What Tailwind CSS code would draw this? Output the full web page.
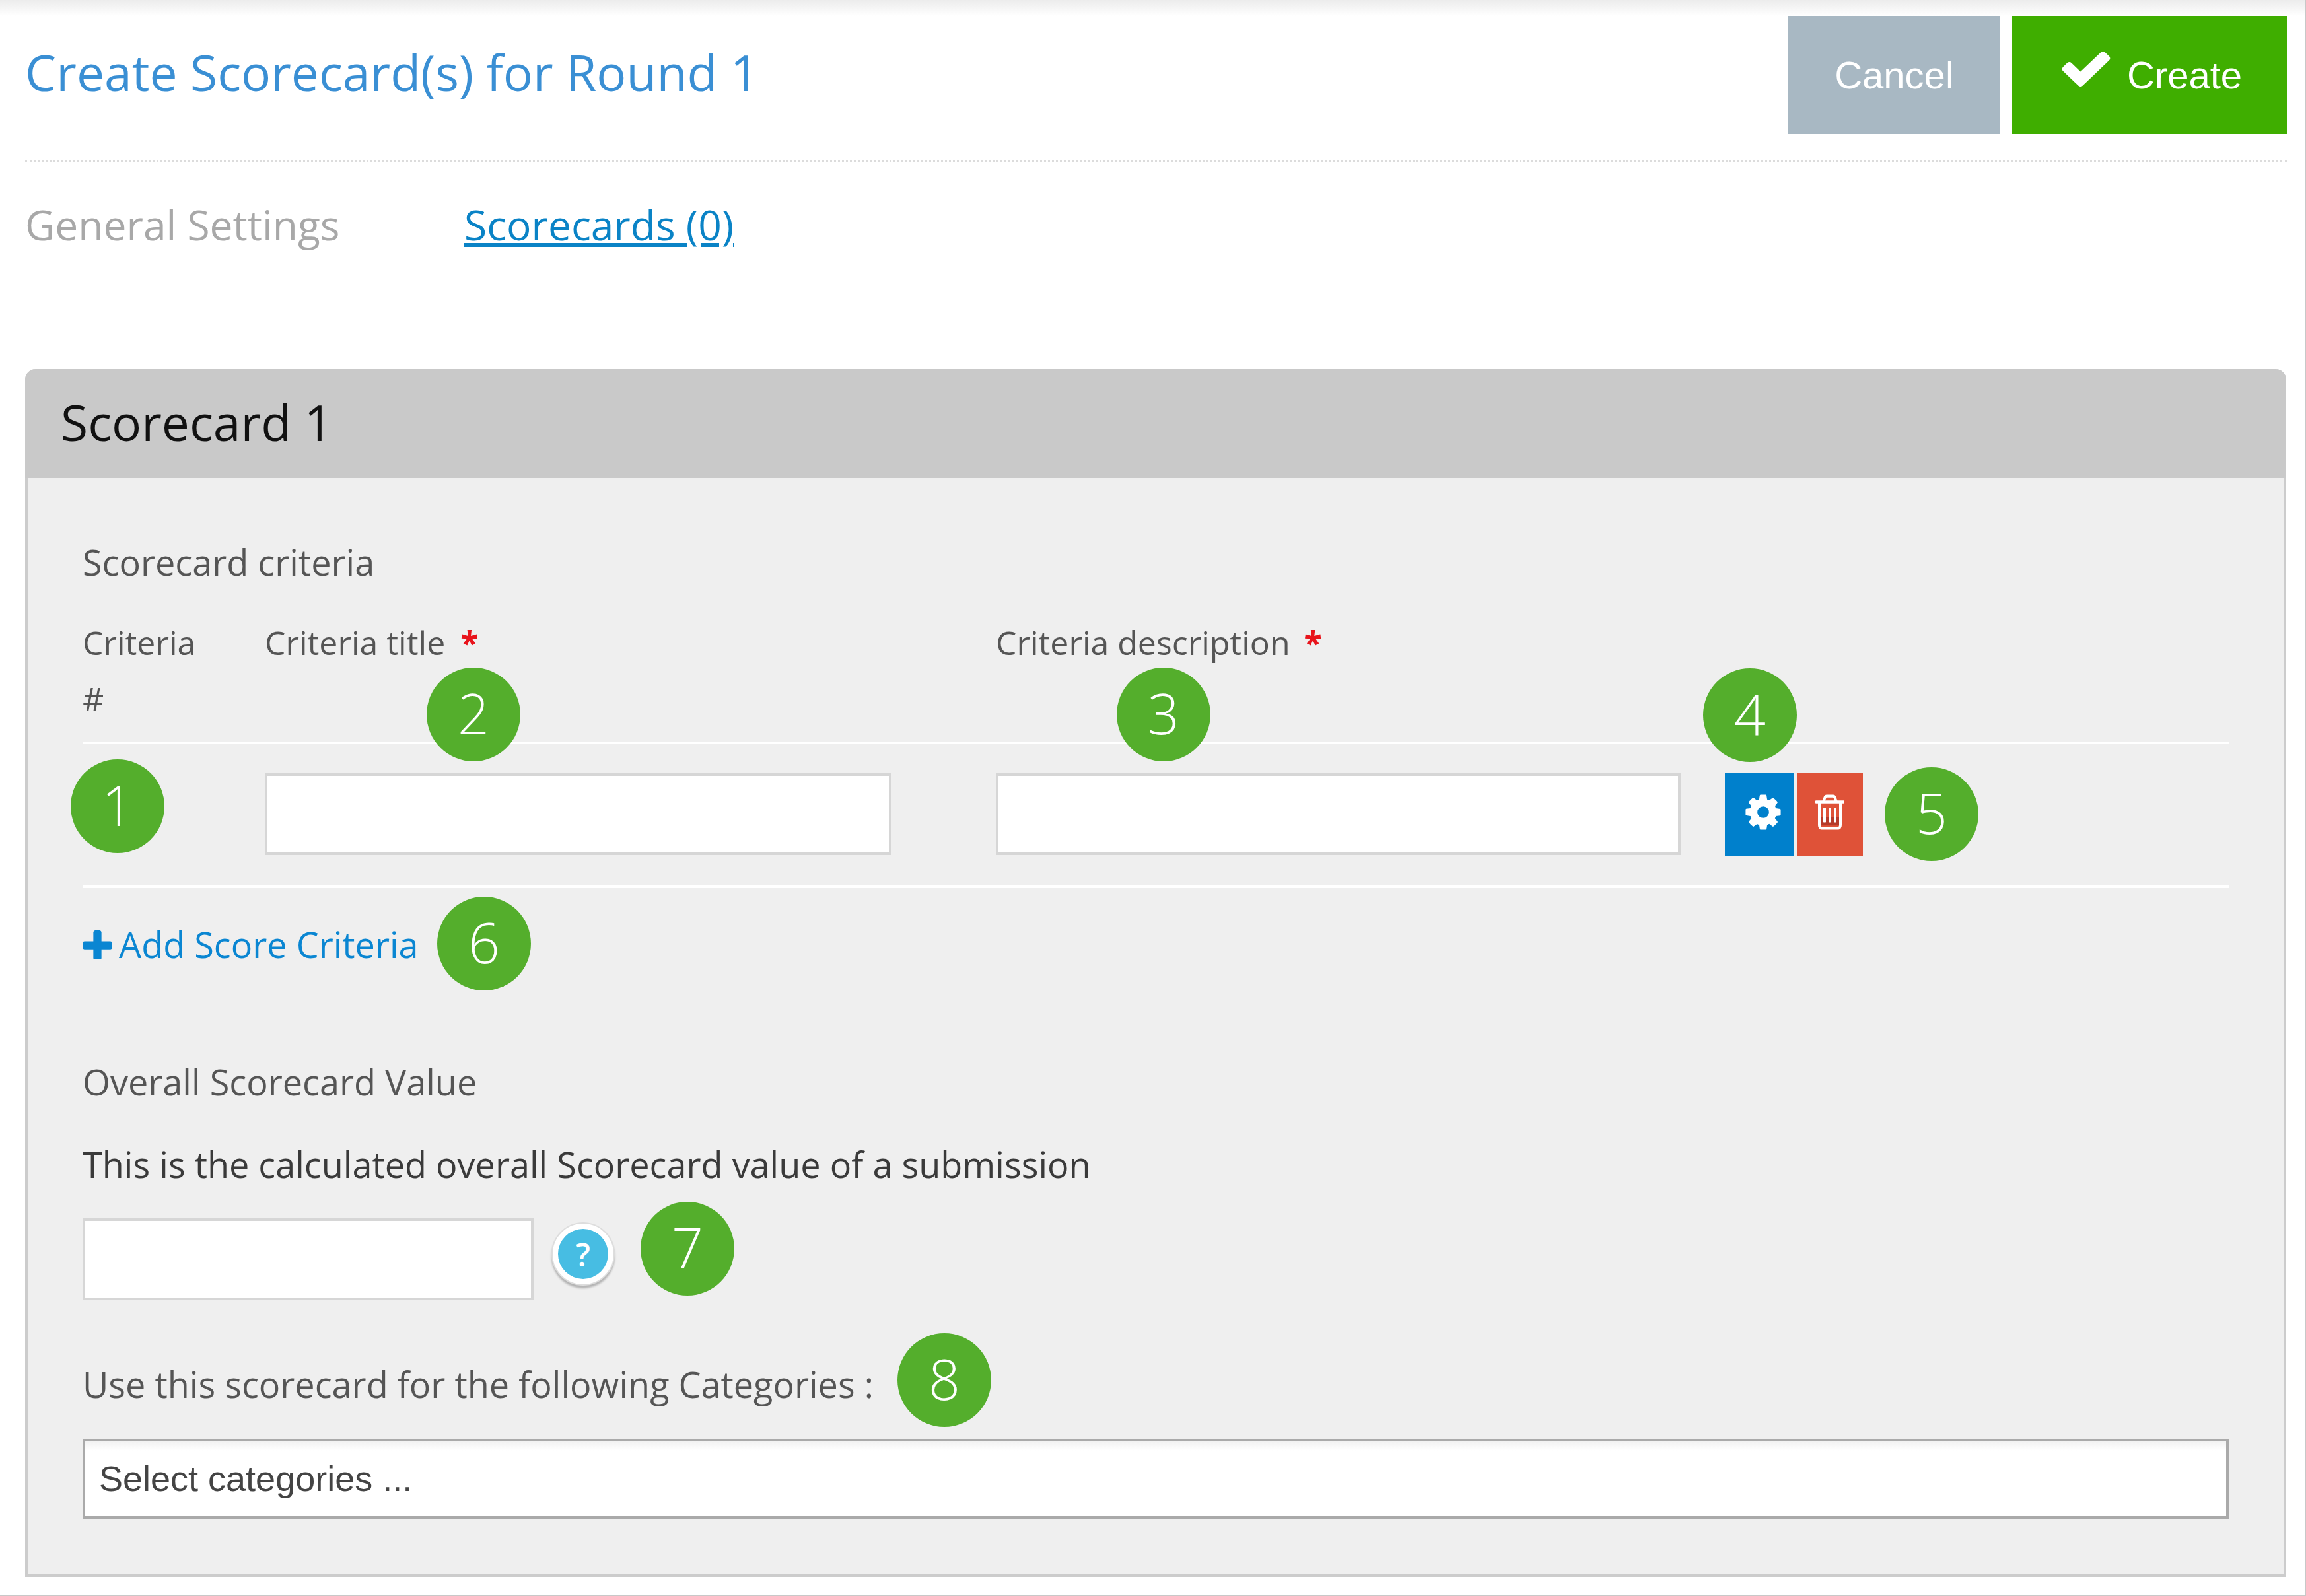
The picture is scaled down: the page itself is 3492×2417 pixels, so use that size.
<!DOCTYPE html>
<html>
<head>
<meta charset="utf-8">
<script src="https://cdn.jsdelivr.net/npm/@tailwindcss/browser@4"></script>
</head>
<body class="bg-white">
<div class="relative w-[3492px] h-[2417px] overflow-hidden bg-white font-['Open_Sans',sans-serif] border-r-[2px] border-b-[2px] border-[#c8c8c8]">
  <div class="h-[24px] bg-gradient-to-b from-[#ececec] to-white"></div>

  <header class="ml-[38px] w-[3425px] h-[221px] flex justify-between border-b-[3px] border-dotted border-[#dcdcdc]">
    <h1 class="h-[170px] flex items-center text-[75px] text-[#3a8fd4] font-normal">Create Scorecard(s) for Round 1</h1>
    <div class="flex gap-[18px] h-[179px]">
      <button class="w-[321px] bg-[#a8b8c3] text-white text-[58px] font-['Liberation_Sans',sans-serif]">Cancel</button>
      <button class="w-[416px] bg-[#3fae00] text-white text-[58px] font-['Liberation_Sans',sans-serif] flex items-center justify-center gap-[20px] pl-[2px]">
        <svg class="w-[84px] h-[80px] -mt-[22px]" viewBox="0 0 1792 1792" preserveAspectRatio="none" fill="currentColor"><path d="M1671 566q0 40-28 68l-724 724-136 136q-28 28-68 28t-68-28l-136-136-362-362q-28-28-28-68t28-68l136-136q28-28 68-28t68 28l294 295 656-657q28-28 68-28t68 28l136 136q28 28 28 68z"/></svg>
        <span>Create</span>
      </button>
    </div>
  </header>

  <nav class="ml-[38px] h-[192px] pt-[60px] flex text-[62.300px] leading-[70px]">
    <span class="w-[665px] text-[#a8a8a8]">General Settings</span>
    <a class="text-[#0a83c6] underline">Scorecards (0)</a>
  </nav>

  <section class="mt-[122px] ml-[38px] w-[3424px] h-[1829px] flex flex-col bg-[#efefef] border-[4px] border-t-0 border-[#cccccc] rounded-t-[16px]">
    <div class="h-[165px] shrink-0 -mx-[4px] pl-[54px] pb-[5px] flex items-center bg-[#c9c9c9] rounded-t-[16px] text-[75px] text-[#111111]">Scorecard 1</div>

    <div class="px-[83px] text-[54px] text-[#555555]">
      <p class="mt-[96px] leading-[62px]">Scorecard criteria</p>

      <div class="mt-[49px] grid grid-cols-[276px_1107px_1fr] h-[192px] leading-[85px] text-[50px]">
        <div>Criteria<br>#</div>
        <div>Criteria title <span class="text-[#e8141c] font-bold ml-[10px]">*</span></div>
        <div>Criteria description <span class="text-[#e8141c] font-bold ml-[8px]">*</span></div>
      </div>

      <div class="h-[222px] border-y-[4px] border-white grid grid-cols-[276px_1107px_1fr] items-start pt-[44px]">
        <div></div>
        <div class="w-[949px] h-[124px] bg-white border-[4px] border-[#d6d6d6]"></div>
        <div class="flex">
          <div class="w-[1037px] h-[124px] bg-white border-[4px] border-[#d6d6d6]"></div>
          <div class="ml-[67px] w-[105px] h-[125px] bg-[#0080cc] flex items-center justify-center pl-[10px] pb-[8px] text-white">
            <svg class="w-[62px] h-[62px]" viewBox="0 0 1792 1792" fill="currentColor"><path d="M1152 896q0-106-75-181t-181-75-181 75-75 181 75 181 181 75 181-75 75-181zm512-109v222q0 12-8 23t-20 13l-185 28q-19 54-39 91 35 50 107 138 10 12 10 25t-9 23q-27 37-99 108t-94 71q-12 0-26-9l-138-108q-44 23-91 38-16 136-29 186-7 28-36 28h-222q-14 0-24.500-8.500t-11.500-21.500l-28-184q-49-16-90-37l-141 107q-10 9-25 9-14 0-25-11-126-114-165-168-7-10-7-23 0-12 8-23 15-21 51-66.500t54-70.500q-27-50-41-99l-183-27q-13-2-21-12.500t-8-23.500v-222q0-12 8-23t19-13l186-28q14-46 39-92-40-57-107-138-10-12-10-24 0-10 9-23 26-36 98.500-107.500t94.500-71.500q13 0 26 10l138 107q44-23 91-38 16-136 29-186 7-28 36-28h222q14 0 24.500 8.500t11.500 21.500l28 184q49 16 90 37l142-107q9-9 24-9 13 0 25 10 129 119 165 170 7 8 7 22 0 12-8 23-15 21-51 66.500t-54 70.500q26 50 41 98l183 28q13 2 21 12.500t8 23.500z"/></svg>
          </div>
          <div class="ml-[4px] w-[100px] h-[125px] bg-[#df5238] flex items-center justify-center pb-[8px] text-white">
            <svg class="w-[56px] h-[62px]" viewBox="0 0 1792 1792" preserveAspectRatio="none" fill="currentColor"><rect x="448" y="1100" width="896" height="380" fill="#b53a2a"/><path d="M704 736v576q0 14-9 23t-23 9h-64q-14 0-23-9t-9-23v-576q0-14 9-23t23-9h64q14 0 23 9t9 23zm256 0v576q0 14-9 23t-23 9h-64q-14 0-23-9t-9-23v-576q0-14 9-23t23-9h64q14 0 23 9t9 23zm256 0v576q0 14-9 23t-23 9h-64q-14 0-23-9t-9-23v-576q0-14 9-23t23-9h64q14 0 23 9t9 23zm128 724v-948h-896v948q0 22 7 40.500t14.500 27 10.500 8.500h832q3 0 10.500-8.500t14.500-27 7-40.500zm-672-1076h448l-48-117q-7-9-17-11h-317q-10 2-17 11zm928 32v64q0 14-9 23t-23 9h-96v948q0 83-47 143.500t-113 60.500h-832q-66 0-113-58.500t-47-141.500v-952h-96q-14 0-23-9t-9-23v-64q0-14 9-23t23-9h309l70-167q15-37 54-63t79-26h320q40 0 79 26t54 63l70 167h309q14 0 23 9t9 23z"/></svg>
          </div>
        </div>
      </div>

      <a class="mt-[50px] h-[70px] flex items-center gap-[10px] text-[#0a86d2]">
        <svg class="w-[45px] h-[45px]" viewBox="192 384 1408 1408" fill="currentColor"><path d="M1600 1024v192q0 40-28 68t-68 28h-416v416q0 40-28 68t-68 28h-192q-40 0-68-28t-28-68v-416h-416q-40 0-68-28t-28-68v-192q0-40 28-68t68-28h416v-416q0-40 28-68t68-28h192q40 0 68 28t28 68v416h416q40 0 68 28t28 68z"/></svg>
        <span>Add Score Criteria</span>
      </a>

      <p class="mt-[142px] leading-[62px]">Overall Scorecard Value</p>
      <p class="mt-[63px] leading-[62px] text-[#3a3a3a]">This is the calculated overall Scorecard value of a submission</p>

      <div class="mt-[51px] flex items-start">
        <div class="w-[683px] h-[124px] bg-white border-[4px] border-[#d6d6d6]"></div>
        <div class="ml-[27px] mt-[6px] w-[96px] h-[96px] rounded-full bg-white border-[2px] border-[#dddddd] shadow-[0_4px_3px_rgba(0,0,0,0.25)] flex items-center justify-center">
          <span class="w-[76px] h-[76px] pt-[2px] rounded-full bg-[#47bde3] text-white text-[48px] font-semibold flex items-center justify-center">?</span>
        </div>
      </div>

      <p class="mt-[96px] leading-[62px]">Use this scorecard for the following Categories :</p>

      <div class="mt-[52px] h-[121px] pl-[21px] flex items-center bg-gradient-to-b from-[#f2f2f2] from-0% to-white to-[12%] border-[4px] border-[#aaaaaa] text-[54px] text-[#444444] font-['Liberation_Sans',sans-serif]">Select categories ...</div>
    </div>
  </section>

  <!-- numbered callouts laid over the form -->
  <span class="absolute left-[107px] top-[1150px] w-[142px] h-[142px] pb-[4px] rounded-full bg-[#54ae2c] text-white text-[84px] font-[350] flex items-center justify-center">1</span>
  <span class="absolute left-[646px] top-[1011px] w-[142px] h-[142px] pb-[4px] rounded-full bg-[#54ae2c] text-white text-[84px] font-[350] flex items-center justify-center">2</span>
  <span class="absolute left-[1691px] top-[1011px] w-[142px] h-[142px] pb-[4px] rounded-full bg-[#54ae2c] text-white text-[84px] font-[350] flex items-center justify-center">3</span>
  <span class="absolute left-[2579px] top-[1012px] w-[142px] h-[142px] pb-[4px] rounded-full bg-[#54ae2c] text-white text-[84px] font-[350] flex items-center justify-center">4</span>
  <span class="absolute left-[2854px] top-[1162px] w-[142px] h-[142px] pb-[4px] rounded-full bg-[#54ae2c] text-white text-[84px] font-[350] flex items-center justify-center">5</span>
  <span class="absolute left-[662px] top-[1358px] w-[142px] h-[142px] pb-[4px] rounded-full bg-[#54ae2c] text-white text-[84px] font-[350] flex items-center justify-center">6</span>
  <span class="absolute left-[970px] top-[1820px] w-[142px] h-[142px] pb-[4px] rounded-full bg-[#54ae2c] text-white text-[84px] font-[350] flex items-center justify-center">7</span>
  <span class="absolute left-[1359px] top-[2019px] w-[142px] h-[142px] pb-[4px] rounded-full bg-[#54ae2c] text-white text-[84px] font-[350] flex items-center justify-center">8</span>
</div>
</body>
</html>
